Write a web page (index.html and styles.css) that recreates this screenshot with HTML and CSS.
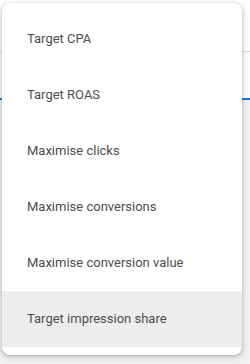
FILE: index.html
```html
<!DOCTYPE html>
<html lang="en">
<head>
    <meta charset="UTF-8">
    <title>Bid strategy menu</title>
    <link rel="stylesheet" href="styles.css">
</head>
<body>
    <div class="page">
        <div class="toolbar"></div>
        <div class="tabs"></div>
        <div class="content"></div>
    </div>

    <ul class="menu">
        <li class="menu-item">Target CPA</li>
        <li class="menu-item">Target ROAS</li>
        <li class="menu-item">Maximise clicks</li>
        <li class="menu-item">Maximise conversions</li>
        <li class="menu-item">Maximise conversion value</li>
        <li class="menu-item active">Target impression share</li>
    </ul>
</body>
</html>
```
FILE: styles.css
```css
body {
    margin: 0;
    background-color: #fff;
    font-family: Roboto, "Liberation Sans", sans-serif;
    width: 250px;
    height: 364px;
    overflow: hidden;
    position: relative;
}
.page {
    display: flex;
    flex-direction: column;
    height: 100%;
}
.toolbar {
    height: 51px;
    border-bottom: 1px solid #dadce0;
}
.tabs {
    height: 46px;
    border-bottom: 2px solid #1a73e8;
}
.content {
    flex: 1;
    background-color: #f3f3f3;
}
.menu {
    position: absolute;
    top: 3px;
    left: 2px;
    width: 240px;
    margin: 0;
    padding: 8px 0;
    list-style: none;
    background-color: #fff;
    border-radius: 8px;
    box-shadow: 0 1px 3px rgba(60, 64, 67, 0.3), 0 2px 6px 2px rgba(60, 64, 67, 0.15);
    overflow: hidden;
}
.menu-item {
    height: 56px;
    line-height: 56px;
    padding-left: 25px;
    font-size: 13px;
    color: #4d4d4d;
}
.active {
    background-color: #ededed;
}
```
